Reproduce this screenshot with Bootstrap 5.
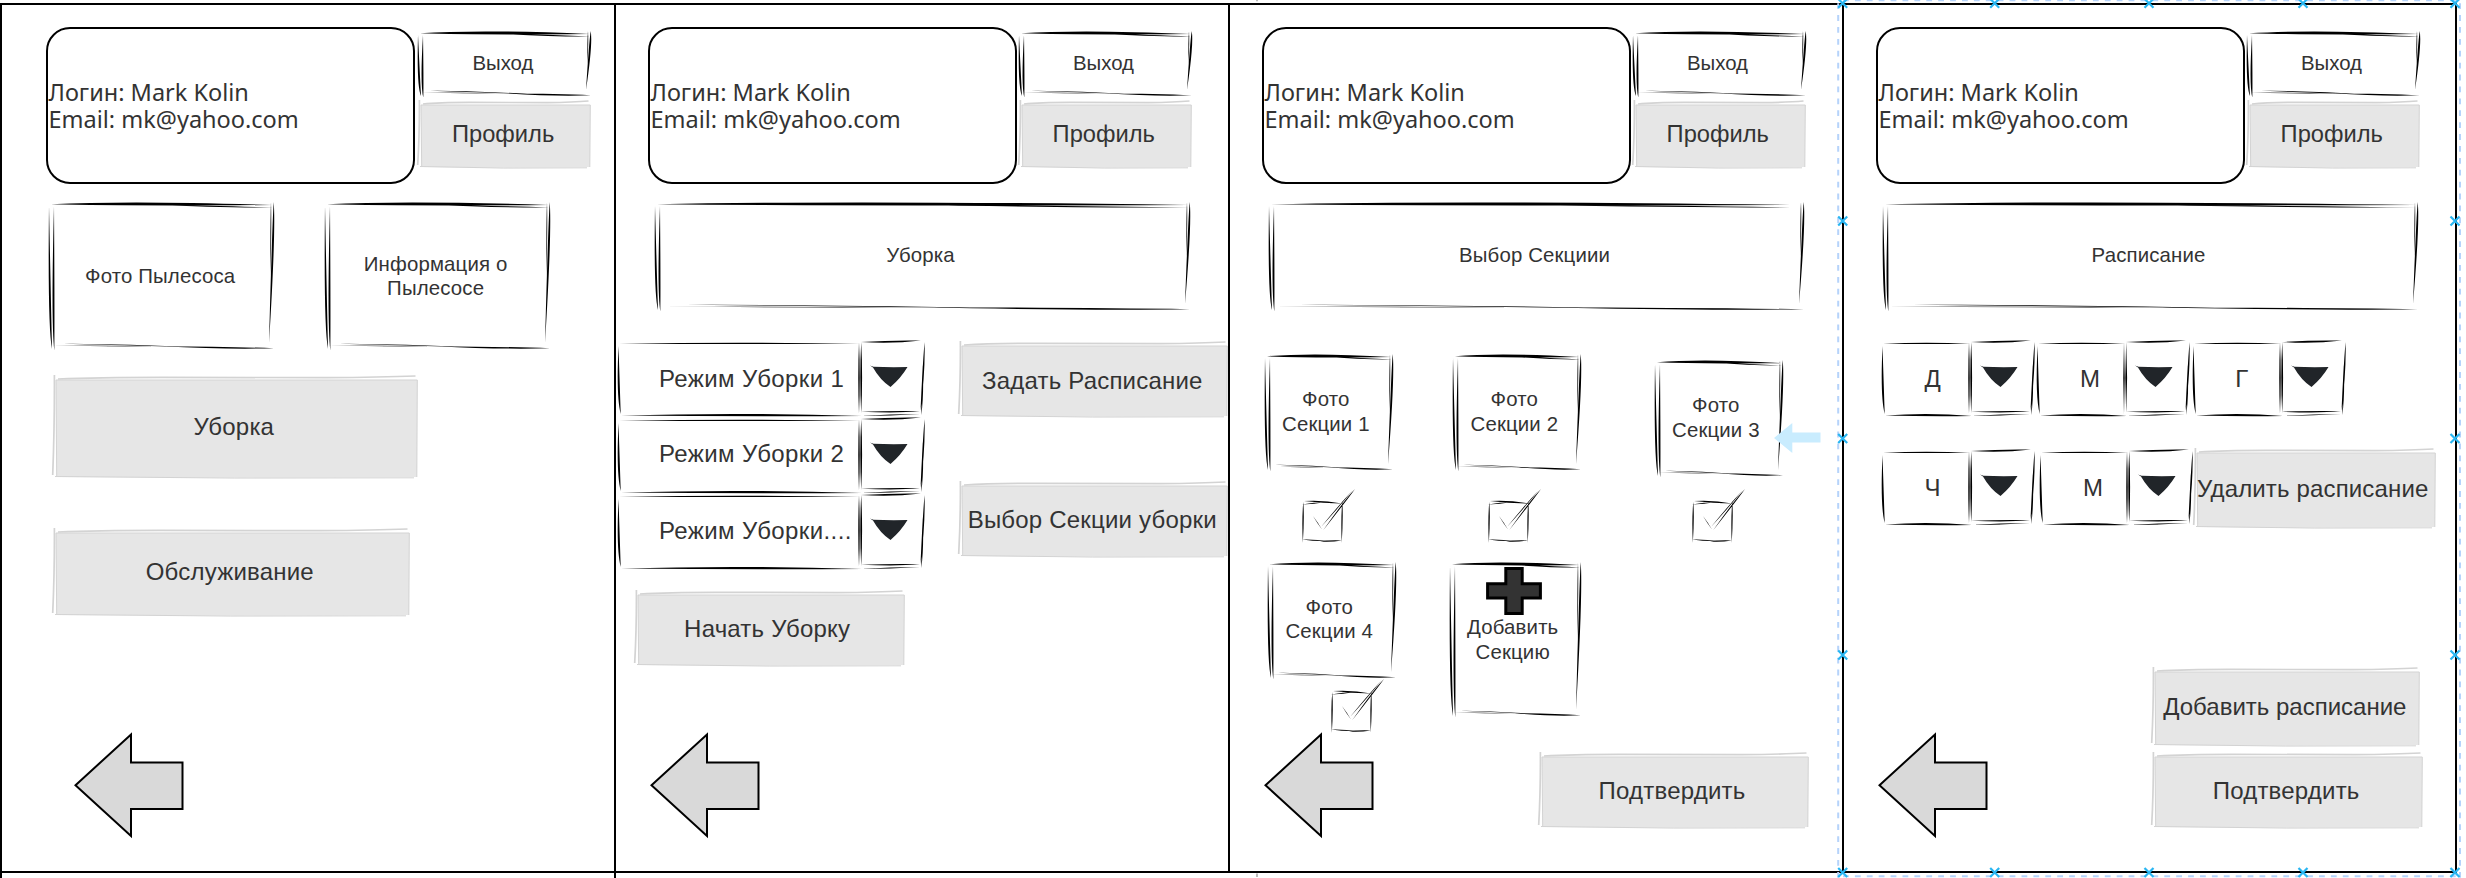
<!DOCTYPE html>
<html lang="ru">
<head>
<meta charset="utf-8">
<title>Пылесос — экраны</title>
<link href="https://cdn.jsdelivr.net/npm/bootstrap@5.3.0/dist/css/bootstrap.min.css" rel="stylesheet">
<style>
  body { background: #fff; color: #333; font-family: "Liberation Sans", Arial, sans-serif; overflow: hidden; }
  .board { width: 2466px; height: 878px; padding-top: 3px; overflow: hidden; }
  .screen { width: 614px; height: 870px; border: solid #000; border-width: 2px 0 2px 2px; flex: none; }
  .screen-last { width: 615px; border-right-width: 2px; }
  .tail::after { content: ""; position: absolute; left: -2px; top: 868px; width: 2px; height: 8px; background: #000; }

  /* account header */
  .head { margin: 22px 0 0 32px; height: 157px; }
  .screen-home .head { margin-left: 44px; }
  .account { width: 369px; border: 2px solid #000; border-radius: 24px; font: 23.5px/27px "Noto Sans", sans-serif; padding: 1.5px 0 0 .5px; }
  .side { width: 173.5px; margin-left: 1px; padding-top: 3.5px; gap: 3px; }
  .screen-home .side { margin-left: 2.4px; }
  .exit { height: 66px; }
  .profile { height: 69px; }

  /* hand-drawn shapes */
  .sketch { position: relative; display: flex; align-items: center; justify-content: center; text-align: center; flex: none; }
  .sketch > svg.ink { position: absolute; left: 0; top: 0; width: 100%; height: 100%; overflow: visible; }
  .sketch > span { position: relative; white-space: nowrap; }
  .frame { font-size: 20.4px; line-height: 24.2px; letter-spacing: .15px; padding-right: 2.5px; }
  .push { font-size: 24px; line-height: 27px; letter-spacing: .2px; padding-right: 2px; }
  .frame.exit { letter-spacing: 0; padding-bottom: 1px; }
  .push.profile { font-size: 23.7px; letter-spacing: 0; padding-top: 1px; }
  .title { margin: 18px 0 0 37.8px; width: 536px; height: 109px; padding-bottom: 3.5px; }

  .photo { width: 226px; height: 148px; }
  .photos { margin: 18px 0 0 46.4px; gap: 49.5px; }
  .clean { margin: 25px 0 0 49.8px; width: 366px; height: 103.5px; }
  .service { margin: 49px 0 0 49.8px; width: 358px; height: 88.5px; }

  .modes { margin: 29px 0 0 1px; }
  .combo { width: 307.5px; height: 77px; margin-bottom: -.4px; justify-content: flex-start; font-size: 24px; letter-spacing: .4px; padding: 1.5px 0 0 42px; }
  .combo.up { padding: 0 0 1.5px 42px; }
  .combo.short { width: 153.7px; padding: 0 0 0 43.6px; margin: 0; }
  .mode-links { margin: 1px 0 0 33.3px; gap: 62.5px; }
  .mode-links .push { width: 270px; height: 77px; padding: 1px 1px 0 0; }
  .start { margin: 20.5px 0 0 17.7px; width: 271px; height: 77px; padding-right: 4px; }

  .foot { margin: auto 0 32.5px 34.4px; height: 107px; }
  .screen-home .foot { margin-left: 72px; }
  .back { width: 110px; height: 107px; }

  .cards-a { margin: 43px 0 0 33.6px; height: 188.5px; }
  .cards-b { margin: 19px 0 0 37px; height: 156px; }
  .cell-2 { margin-left: 60px; }
  .cell-3 { margin: 6px 0 0 73px; }
  .cell-5 { margin-left: 53px; }
  .section { width: 128.5px; height: 116.5px; padding: 0 4px 1.5px 0; }
  .section-add { width: 131.5px; height: 155px; padding: 1px 3px 0 0; }
  .tick { display: block; width: 54px; height: 54px; margin: 18px 0 0 38px; overflow: visible; }
  .cell-2 .tick { margin-left: 36.3px; }
  .cell-3 .tick { margin-top: 12px; }
  .cell-4 .tick { margin: 1px 0 0 63.7px; }
  .plus { position: absolute; left: 37px; top: 5px; width: 56px; height: 49px; }
  .cue { position: absolute; left: 120.5px; top: 63px; width: 47px; height: 30px; }
  .confirm { width: 271px; height: 77px; margin: 20.5px 33px 0 auto; padding-right: 3px; }

  .date { margin: 29px 0 0 37px; gap: 1.6px; }
  .time { margin: 31px 0 0 37px; height: 82px; }
  .time .combo + .combo { margin-left: 4.6px; }
  .time .combo { margin-top: 1.2px; }
  .delete { width: 242.5px; height: 80.5px; letter-spacing: .15px; padding-right: 3px; }
  .plans { margin: -64.5px 32px 0 auto; gap: 4.7px; }
  .plans .push { width: 271.7px; height: 77px; }
  .plans .add { width: 269px; height: 80.3px; letter-spacing: 0; padding-bottom: 1px; }

  .selection { position: absolute; left: 0; top: 0; width: 2466px; height: 878px; pointer-events: none; }
</style>
</head>
<body>
<main class="board d-flex position-relative">

  <section class="screen screen-home tail position-relative d-flex flex-column">
    <header class="head d-flex">
      <div class="account d-flex align-items-center"><span>Логин: Mark Kolin<br>Email: mk@yahoo.com</span></div>
      <div class="side d-flex flex-column"><div class="sketch frame exit"><span>Выход</span></div><div class="sketch push profile"><span>Профиль</span></div></div>
    </header>
    <div class="photos d-flex">
      <div class="sketch frame photo"><span>Фото Пылесоса</span></div>
      <div class="sketch frame photo"><span>Информация о<br>Пылесосе</span></div>
    </div>
    <div class="sketch push clean"><span>Уборка</span></div>
    <div class="sketch push service"><span>Обслуживание</span></div>
    <footer class="foot d-flex"><svg class="back"><use href="#arrow-back"/></svg></footer>
  </section>

  <section class="screen tail position-relative d-flex flex-column">
    <header class="head d-flex">
      <div class="account d-flex align-items-center"><span>Логин: Mark Kolin<br>Email: mk@yahoo.com</span></div>
      <div class="side d-flex flex-column"><div class="sketch frame exit"><span>Выход</span></div><div class="sketch push profile"><span>Профиль</span></div></div>
    </header>
    <div class="sketch frame title"><span>Уборка</span></div>
    <div class="modes d-flex align-items-start">
      <div class="d-flex flex-column">
        <div class="sketch combo"><span>Режим Уборки 1</span></div>
        <div class="sketch combo up"><span>Режим Уборки 2</span></div>
        <div class="sketch combo up"><span>Режим Уборки....</span></div>
      </div>
      <div class="mode-links d-flex flex-column">
        <div class="sketch push"><span>Задать Расписание</span></div>
        <div class="sketch push"><span>Выбор Секции уборки</span></div>
      </div>
    </div>
    <div class="sketch push start"><span>Начать Уборку</span></div>
    <footer class="foot d-flex"><svg class="back"><use href="#arrow-back"/></svg></footer>
  </section>

  <section class="screen position-relative d-flex flex-column">
    <header class="head d-flex">
      <div class="account d-flex align-items-center"><span>Логин: Mark Kolin<br>Email: mk@yahoo.com</span></div>
      <div class="side d-flex flex-column"><div class="sketch frame exit"><span>Выход</span></div><div class="sketch push profile"><span>Профиль</span></div></div>
    </header>
    <div class="sketch frame title"><span>Выбор Секциии</span></div>
    <div class="cards-a d-flex align-items-start">
      <div><div class="sketch frame section"><span>Фото<br>Секции 1</span></div><svg class="tick"><use href="#tick"/></svg></div>
      <div class="cell-2"><div class="sketch frame section"><span>Фото<br>Секции 2</span></div><svg class="tick"><use href="#tick"/></svg></div>
      <div class="cell-3"><div class="sketch frame section"><span>Фото<br>Секции 3</span><svg class="cue" viewBox="0 0 47 30"><path d="M0 15 18.3 0V9.5H46.5V19.5H18.3V30Z" fill="#c9ecfe"/></svg></div><svg class="tick"><use href="#tick"/></svg></div>
    </div>
    <div class="cards-b d-flex align-items-start">
      <div class="cell-4"><div class="sketch frame section"><span>Фото<br>Секции 4</span></div><svg class="tick"><use href="#tick"/></svg></div>
      <div class="cell-5"><div class="sketch frame section-add"><span>Добавить<br>Секцию</span><svg class="plus" viewBox="0 0 56 49"><path d="M19.8 1.6h16.4v15.2h18.2v14.3H36.2v15.3H19.8V31.1H1.6V16.8h18.2Z" fill="#333" stroke="#000" stroke-width="3"/></svg></div></div>
    </div>
    <footer class="foot d-flex"><svg class="back"><use href="#arrow-back"/></svg><div class="sketch push confirm"><span>Подтвердить</span></div></footer>
  </section>

  <section class="screen screen-last position-relative d-flex flex-column">
    <header class="head d-flex">
      <div class="account d-flex align-items-center"><span>Логин: Mark Kolin<br>Email: mk@yahoo.com</span></div>
      <div class="side d-flex flex-column"><div class="sketch frame exit"><span>Выход</span></div><div class="sketch push profile"><span>Профиль</span></div></div>
    </header>
    <div class="sketch frame title"><span>Расписание</span></div>
    <div class="date d-flex">
      <div class="sketch combo short"><span>Д</span></div>
      <div class="sketch combo short"><span>М</span></div>
      <div class="sketch combo short"><span>Г</span></div>
    </div>
    <div class="time d-flex">
      <div class="sketch combo short"><span>Ч</span></div>
      <div class="sketch combo short"><span>М</span></div>
      <div class="sketch push delete"><span>Удалить расписание</span></div>
    </div>
    <footer class="foot d-flex"><svg class="back"><use href="#arrow-back"/></svg>
      <div class="plans d-flex flex-column">
        <div class="sketch push add"><span>Добавить расписание</span></div>
        <div class="sketch push"><span>Подтвердить</span></div>
      </div>
    </footer>
  </section>

  <svg class="selection" id="selection">
    <path d="M1257 0V1.2M1257 873.5V877" stroke="#aaa" stroke-width="1.6" fill="none"/>
    <path d="M1838.2 3.2V878M2460 3.2V878M1843 .3H2460M1843 876.3H2460" stroke="#b5d3fb" stroke-width="2" stroke-dasharray="5.8 6.1" fill="none"/>
  </svg>
</main>

<svg width="0" height="0" class="position-absolute top-0">
  <symbol id="arrow-back" overflow="visible"><path d="M1.5 53.2 57 2.5V30.5H108.5V77H57V104Z" fill="#d9d9d9" stroke="#000" stroke-width="2"/></symbol>
  <symbol id="tick" overflow="visible"><path id="tick-ink" fill="#000"/></symbol>
</svg>

<script src="https://cdn.jsdelivr.net/npm/bootstrap@5.3.0/dist/js/bootstrap.bundle.min.js"></script>
<script>
  // One pen stroke: a curve from a to b, thickest (t px) around "pos", bent sideways by "bow".
  function pen(x1, y1, x2, y2, t, pos = .5, bow = 0) {
    const dx = x2 - x1, dy = y2 - y1, l = Math.hypot(dx, dy), nx = -dy / l, ny = dx / l;
    const mx = x1 + dx * pos, my = y1 + dy * pos, p = 2 * bow + t, q = 2 * bow - t;
    return `M${x1} ${y1}Q${mx + nx * p} ${my + ny * p} ${x2} ${y2}Q${mx + nx * q} ${my + ny * q} ${x1} ${y1}Z`;
  }
  const path = (d, attrs) => `<path d="${d}" ${attrs}/>`;

  function frame(w, h) {
    return path([
      pen(3, 2.3, w - 2, 3, 3, .35, -.7), pen(w * .45, 2.5, w - 1, 5.5, 1, .6, .3),
      pen(1, 4, 4, h - 1, 1.9, .85, 1), pen(6, 4, 6.3, h + .5, 1.9, .8, .7),
      pen(w - .3, 0, w - 5, h - 7, 2, .2, -.6), pen(w - 3, 0, w - 3.5, h * .5, .8, .3),
      pen(6, h - 6.5, w * .7, h - 2.5, .7, .5, -.4), pen(5, h - 4.5, w * .5, h - 3.5, .5),
      pen(w * .5, h - 3.8, w, h - 1.8, 1.5, .6, .4)
    ].join(''), 'fill="#000"');
  }

  function push(w, h) {
    return path(`M4 5H${w - .7}L${w - 1.2} ${h - 2}Q${w / 2} ${h - .5} 4.7 ${h - 2}Z`, 'fill="#e6e6e6"') +
      path(`M4 5H${w - .7}L${w - 1.2} ${h - 2}M3 ${h - 2.5}Q${w / 2} ${h} ${w - 4} ${h - 1.2}M4 5 4.7 ${h - 2}`, 'fill="none" stroke="#d3d3d3"') +
      path(`M6 4Q${w * .12} 2.3 ${w * .3} 2.3L${w * .75} 2.7Q${w * .9} 2.3 ${w - 2.5} 1M2.4 0Q2.6 ${h * .5} .7 ${h - 4}`, 'fill="none" stroke="#d3d3d3" stroke-width="1.7"');
  }

  function combo(w, h) {
    const s = w - 65;
    return path([
      pen(2, 4, s, 4, 1.2, .5, -.6), pen(1.5, 6, 3.7, h - 3, 2, .75, 1),
      pen(4, 75.5, s + 2, 76, 2.2, .5, -.7),
      pen(s - 1, 2, s - 1, 74, 1.5), pen(s + 1.2, 2, s + 1.2, 73, 1.8),
      pen(s + 1, 2, w - 4, .6, 2, .5, .4),
      pen(w - .5, 2, w - 4.5, 71, 1.6, .4, -.5), pen(w - 2.2, 25, w - 3.7, 75, 1.5, .6, -.3),
      pen(s + 1, 71.7, w - 5, 71.3, 1.3, .6, .3), pen(s + 1, 76, w - 5, 74, .8)
    ].join(''), 'fill="#000"') +
      path(`M${s + 10} 25.5L${s + 13.5} 26.8Q${s + 30} 27.4 ${s + 47.5} 27Q${s + 41} 38 ${s + 30.5} 47Q${s + 20} 40 ${s + 13} 27.5Z`, 'fill="#212529"');
  }

  document.querySelectorAll('.sketch').forEach(el => {
    const w = el.offsetWidth, h = el.offsetHeight, c = el.classList;
    const draw = c.contains('frame') ? frame : c.contains('push') ? push : combo;
    el.insertAdjacentHTML('afterbegin', `<svg class="ink">${draw(w, h)}</svg>`);
  });

  document.getElementById('tick-ink').setAttribute('d', [
    pen(2, 12, 40, 14.5, 1.7, .5, -.4), pen(0, 15.5, 24, 13, 1),
    pen(1.3, 13, .8, 54, 1.4, .4), pen(40.3, 12, 39.7, 54, 1.3, .4),
    pen(0, 50.5, 26, 52, 1.2), pen(18, 52.5, 40, 51.5, 1.2),
    pen(11, 27, 20, 40.5, .5), pen(19, 38, 50, 2, .8, .6), pen(21, 41.5, 53, 0, 1.1, .75, -.3)
  ].join(''));

  // Connection points round the selected screen.
  const xs = [1842.7, 1994.7, 2149, 2303, 2455], ys = [3.3, 221, 438.5, 655, 872.5];
  let marks = '';
  xs.forEach((x, i) => ys.forEach((y, j) => {
    if (i % 4 === 0 || j % 4 === 0) marks += `M${x - 4.5} ${y - 4.5}l9 9m0 -9l-9 9`;
  }));
  document.getElementById('selection').insertAdjacentHTML('beforeend', path(marks, 'stroke="#29b6f2" stroke-width="2.2" fill="none"'));
</script>
</body>
</html>
